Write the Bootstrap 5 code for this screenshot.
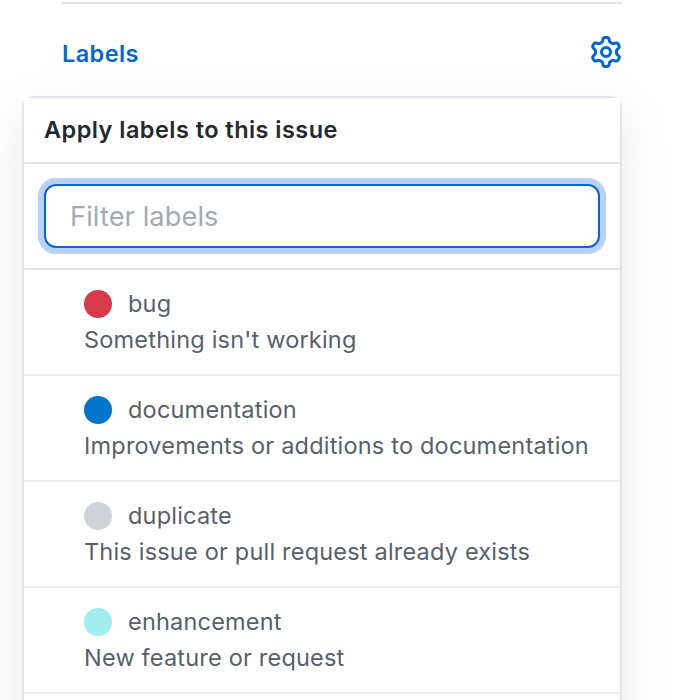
<!DOCTYPE html>
<html lang="en">
<head>
<meta charset="utf-8">
<meta name="viewport" content="width=device-width, initial-scale=1">
<title>Labels</title>
<link href="https://cdn.jsdelivr.net/npm/bootstrap@5.3.0/dist/css/bootstrap.min.css" rel="stylesheet">
<style>
body { font-family: Inter, "Liberation Sans", sans-serif; font-size: 23.5px; letter-spacing: .2px; line-height: 36px; color: #586069; background: #fff; }
.sidebar-head { margin: 2px 78px 0 62px; border-top: 2px solid #e1e4e8; height: 94px; padding-top: 32px; }
.sidebar-title, .gear-btn { color: #0366d6; }
.sidebar-title { letter-spacing: .4px; }
.gear-btn svg { display: block; fill: currentColor; }
.picker { width: 600px; margin-left: 22px; border: 2px solid #e1e4e8; border-radius: 12px; box-shadow: 0 16px 48px rgba(149,157,165,.2); height: 700px; background: #fff; }
.picker-head { background: #fff; color: #24292e; height: 66px; padding: 14px 20px 0; border-bottom: 2px solid #e1e4e8; letter-spacing: .46px; }
.picker-filter { padding: 20px; border-bottom: 2px solid #e1e4e8; }
.picker-filter .form-control { height: 64px; padding: 0 24px; border: 2px solid #0366d6; border-radius: 12px; font-size: 27.2px; letter-spacing: .1px; box-shadow: 0 0 0 6px #b9d1f3; color: #24292e; }
.picker-filter .form-control::placeholder { color: #a3aab1; opacity: 1; }
.label-row { height: 106px; padding: 16px 0 0 60px; border-bottom: 2px solid #eaecef; color: #586069; white-space: nowrap; }
.swatch { width: 28px; height: 28px; margin-right: 16px; }
.swatch-bug { background: #d73a4a; }
.swatch-docs { background: #0075ca; }
.swatch-dup { background: #cfd3d7; }
.swatch-enh { background: #a2eeef; }
</style>
<script src="https://cdn.jsdelivr.net/npm/bootstrap@5.3.0/dist/js/bootstrap.bundle.min.js"></script>
</head>
<body>
<main class="vh-100 overflow-hidden">
<header class="sidebar-head d-flex justify-content-between align-items-start">
  <div class="sidebar-title fw-semibold">Labels</div>
  <button class="gear-btn btn p-0 border-0" type="button" aria-label="Edit labels">
    <svg width="32" height="32" viewBox="0 0 16 16" aria-hidden="true"><path fill-rule="evenodd" d="M7.429 1.525a6.593 6.593 0 011.142 0c.036.003.108.036.137.146l.289 1.105c.147.56.55.967.997 1.189.174.086.341.183.501.29.417.278.97.423 1.53.27l1.102-.303c.11-.03.175.016.195.046.219.31.41.641.573.989.014.031.022.11-.059.19l-.815.806c-.411.406-.562.957-.53 1.456a4.588 4.588 0 010 .582c-.032.499.119 1.05.53 1.456l.815.806c.08.08.073.159.059.19a6.494 6.494 0 01-.573.99c-.02.029-.086.074-.195.045l-1.103-.303c-.559-.153-1.112-.008-1.529.27-.16.107-.327.204-.5.29-.449.222-.851.628-.998 1.189l-.289 1.105c-.029.11-.101.143-.137.146a6.613 6.613 0 01-1.142 0c-.036-.003-.108-.037-.137-.146l-.289-1.105c-.147-.56-.55-.967-.997-1.189a4.502 4.502 0 01-.501-.29c-.417-.278-.97-.423-1.53-.27l-1.102.303c-.11.03-.175-.016-.195-.046a6.492 6.492 0 01-.573-.989c-.014-.031-.022-.11.059-.19l.815-.806c.411-.406.562-.957.53-1.456a4.587 4.587 0 010-.582c.032-.499-.119-1.05-.53-1.456l-.815-.806c-.08-.08-.073-.159-.059-.19a6.44 6.44 0 01.573-.99c.02-.029.086-.075.195-.045l1.103.303c.559.153 1.112.008 1.529-.27.16-.107.327-.204.5-.29.449-.222.851-.628.998-1.189l.289-1.105c.029-.11.101-.143.137-.146zM8 0c-.236 0-.47.01-.701.03-.743.065-1.29.615-1.458 1.261l-.29 1.106c-.017.066-.078.158-.211.224a5.994 5.994 0 00-.668.386c-.123.082-.233.09-.3.071L3.27 2.776c-.644-.177-1.392.02-1.82.63a7.977 7.977 0 00-.704 1.217c-.315.675-.111 1.422.363 1.891l.815.806c.05.048.098.147.088.294a6.084 6.084 0 000 .772c.01.147-.038.246-.088.294l-.815.806c-.474.469-.678 1.216-.363 1.891.2.428.436.835.704 1.218.428.609 1.176.806 1.82.63l1.103-.303c.066-.019.176-.011.299.071.213.143.436.272.668.386.133.066.194.158.212.224l.289 1.106c.169.646.715 1.196 1.458 1.26a8.094 8.094 0 001.402 0c.743-.064 1.29-.614 1.458-1.26l.29-1.106c.017-.066.078-.158.211-.224a5.98 5.98 0 00.668-.386c.123-.082.233-.09.3-.071l1.102.302c.644.177 1.392-.02 1.82-.63.268-.382.505-.789.704-1.217.315-.675.111-1.422-.364-1.891l-.814-.806c-.05-.048-.098-.147-.088-.294a6.1 6.1 0 000-.772c-.01-.147.039-.246.088-.294l.814-.806c.475-.469.679-1.216.364-1.891a7.992 7.992 0 00-.704-1.218c-.428-.609-1.176-.806-1.82-.63l-1.103.303c-.066.019-.176.011-.299-.071a5.991 5.991 0 00-.668-.386c-.133-.066-.194-.158-.212-.224L10.16 1.29C9.99.645 9.444.095 8.701.031A8.094 8.094 0 008 0zm1.5 8a1.5 1.5 0 11-3 0 1.5 1.5 0 013 0zM11 8a3 3 0 11-6 0 3 3 0 016 0z"/></svg>
  </button>
</header>
<section class="picker">
  <div class="picker-head fw-semibold"><span>Apply labels to this issue</span></div>
  <div class="picker-filter"><input class="form-control" type="text" placeholder="Filter labels" aria-label="Filter labels"></div>
  <div class="label-row">
    <div class="d-flex align-items-center"><span class="swatch swatch-bug rounded-circle"></span><span>bug</span></div>
    <div><span>Something isn't working</span></div>
  </div>
  <div class="label-row">
    <div class="d-flex align-items-center"><span class="swatch swatch-docs rounded-circle"></span><span>documentation</span></div>
    <div><span>Improvements or additions to documentation</span></div>
  </div>
  <div class="label-row">
    <div class="d-flex align-items-center"><span class="swatch swatch-dup rounded-circle"></span><span>duplicate</span></div>
    <div><span>This issue or pull request already exists</span></div>
  </div>
  <div class="label-row">
    <div class="d-flex align-items-center"><span class="swatch swatch-enh rounded-circle"></span><span>enhancement</span></div>
    <div><span>New feature or request</span></div>
  </div>
</section>
</main>
</body>
</html>
